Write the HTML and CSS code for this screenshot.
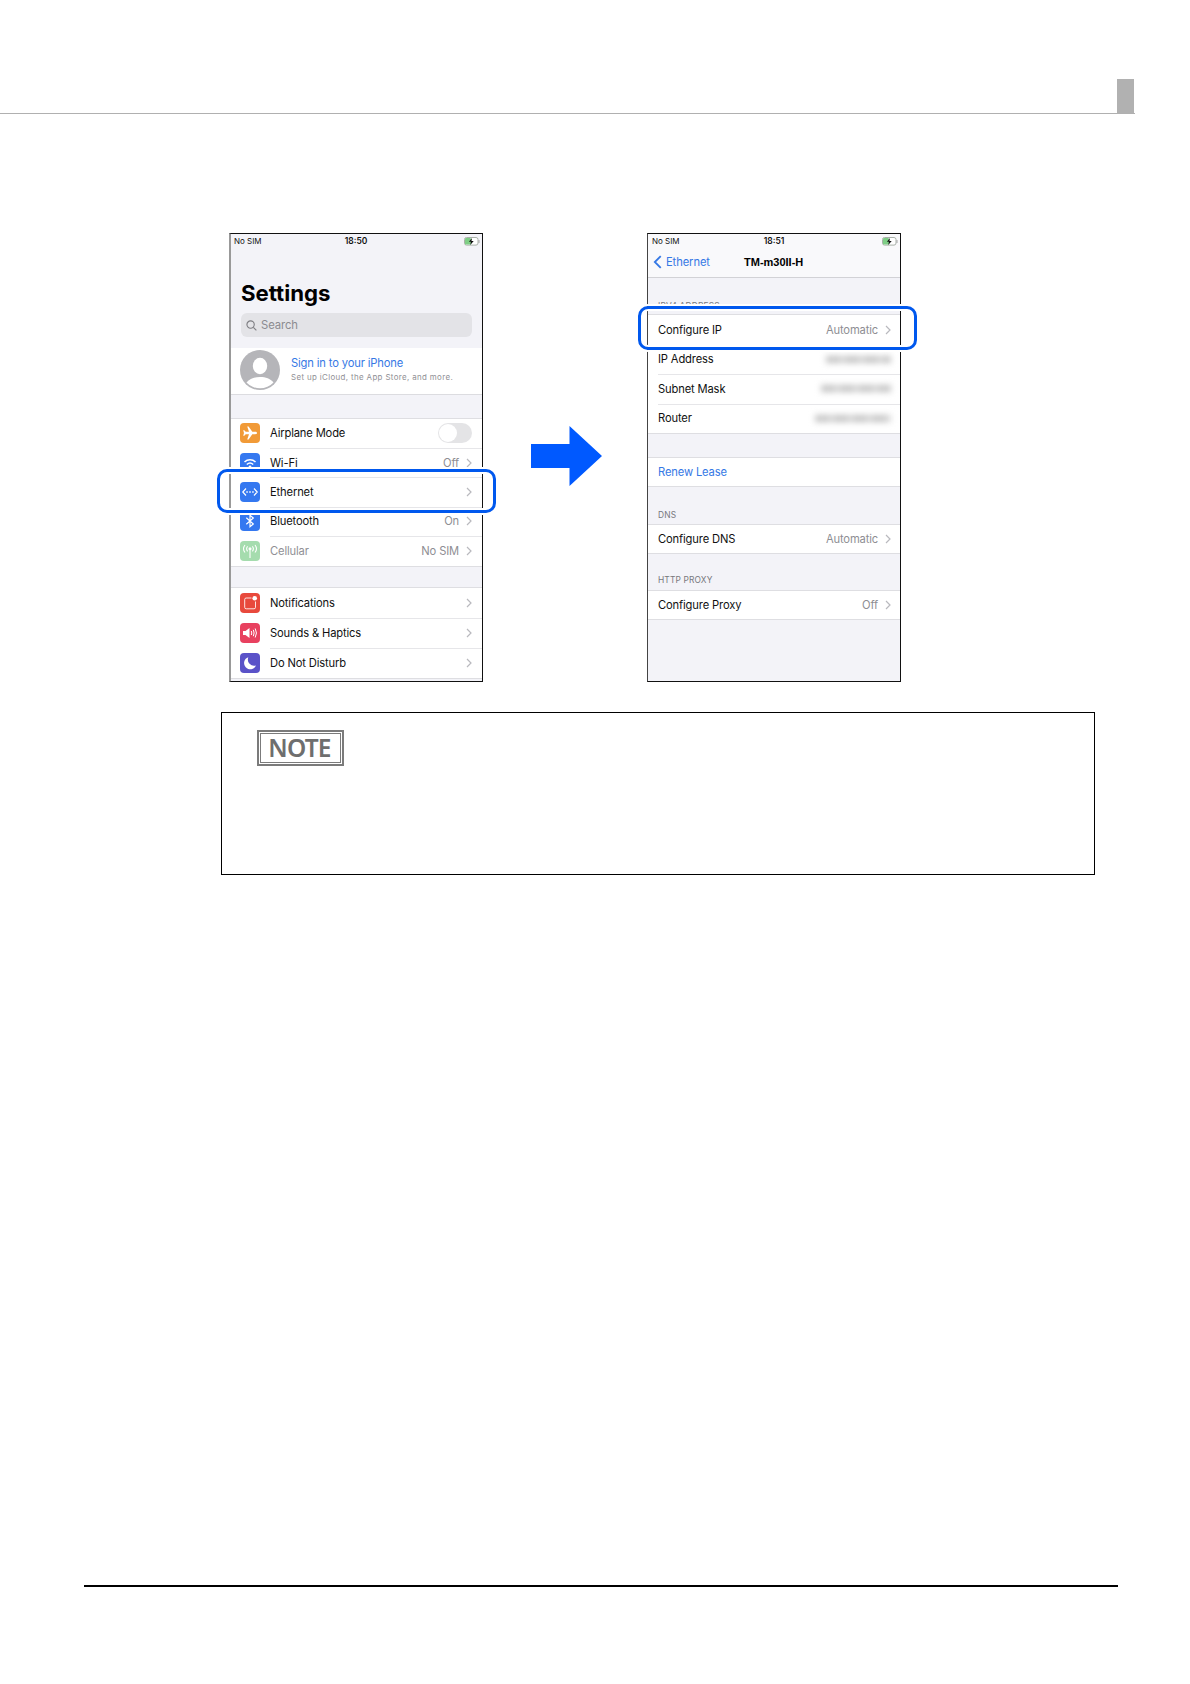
FILE: index.html
```
<!DOCTYPE html>
<html lang="en">
	<head>
		<meta charset="utf-8">
		<title>Settings</title>
		<link rel="stylesheet" href="styles.css">
	</head>
	<body>
		<div class="page-head"><span class="tab"></span></div>

		<div class="figures">
			<div class="phone settings">
				<div class="status">
					<span class="sim">No SIM</span>
					<span class="time">18:50</span>
					<svg class="battery" viewBox="0 0 16 9"><rect x=".5" y=".5" width="13.5" height="7.6" rx="2" fill="#fff" stroke="#a8b0a8"/><rect x="1" y="1" width="6" height="6.6" rx="1.2" fill="#7fce86"/><path d="M15 3v3" stroke="#a8a8a8"/><path d="M8 .9 4.9 4.8h2L6.300 7.900 9.700 3.900H7.500z" fill="#111"/></svg>
				</div>
				<h1>Settings</h1>
				<div class="search">
					<svg viewBox="0 0 12 12"><circle cx="5" cy="5" r="4" /><path d="M8 8l3.300 3.300"/></svg>
					<span>Search</span>
				</div>
				<div class="profile">
					<svg class="avatar" viewBox="0 0 40 40"><circle cx="20" cy="20" r="20" fill="#b5b5b9"/><ellipse cx="20" cy="16" rx="7.200" ry="8.200" fill="#fff"/><path d="M6.500 32.500C10 28.500 14 27 20 27s10 1.500 13.500 5.500A18.500 18.500 0 0 1 6.500 32.500z" fill="#fff"/></svg>
					<div>
						<p class="sign">Sign in to your iPhone</p>
						<p class="hint">Set up iCloud, the App Store, and more.</p>
					</div>
				</div>
				<ul class="list first">
					<li>
						<svg class="icon orange" viewBox="0 0 20 20"><path fill="#fff" d="M17 10c0-.8-.8-1.200-1.700-1.200h-3L8.600 3.500H7.200l1.800 5.300H5.700L4.300 7.200H3.200L4 10l-.8 2.800h1.100l1.400-1.600H9l-1.800 5.300h1.400l3.700-5.300h3c.9 0 1.700-.4 1.700-1.200z"/></svg>
						<span class="name">Airplane Mode</span><span class="switch"></span>
					</li>
					<li>
						<svg class="icon blue" viewBox="0 0 20 20"><path d="M4.500 9a8 8 0 0 1 11 0M6.800 11.500a4.800 4.800 0 0 1 6.400 0" fill="none" stroke="#fff" stroke-width="1.500"/><path d="M8.400 13.300 10 15l1.600-1.700a2.400 2.400 0 0 0-3.200 0z" fill="#fff"/></svg>
						<span class="name">Wi-Fi</span><span class="value">Off</span><svg class="more" viewBox="0 0 6 10"><path d="M1 1l4 4-4 4"/></svg>
					</li>
					<li>
						<svg class="icon blue" viewBox="0 0 20 20"><path d="M6 6.500 2.800 10 6 13.500M14 6.500l3.200 3.500-3.200 3.500" fill="none" stroke="#fff" stroke-width="1.200"/><path d="M6.300 10h1.500M9.250 10h1.500M12.200 10h1.500" stroke="#fff" stroke-width="1.500"/></svg>
						<span class="name">Ethernet</span><svg class="more" viewBox="0 0 6 10"><path d="M1 1l4 4-4 4"/></svg>
					</li>
					<li>
						<svg class="icon blue" viewBox="0 0 20 20"><path d="M6.300 6.800l7 6.200L10 15.700V4.300L13.300 7l-7 6.200" fill="none" stroke="#fff" stroke-width="1.200"/></svg>
						<span class="name">Bluetooth</span><span class="value">On</span><svg class="more" viewBox="0 0 6 10"><path d="M1 1l4 4-4 4"/></svg>
					</li>
					<li class="off">
						<svg class="icon green" viewBox="0 0 20 20"><path d="M10 8v9M7.600 5.300a4 4 0 0 0 0 5M12.400 5.300a4 4 0 0 1 0 5M5 4a6 6 0 0 0 0 7.500M15 4a6 6 0 0 1 0 7.500" fill="none" stroke="#fff" stroke-width="1.100"/><circle cx="10" cy="7.800" r="1.500" fill="#fff"/></svg>
						<span class="name">Cellular</span><span class="value">No SIM</span><svg class="more" viewBox="0 0 6 10"><path d="M1 1l4 4-4 4"/></svg>
					</li>
				</ul>
				<ul class="list second">
					<li>
						<svg class="icon red" viewBox="0 0 20 20"><path d="M11.500 5H6.200Q4.700 5 4.700 6.500v7.800q0 1.500 1.500 1.500H14q1.500 0 1.500-1.500V8.500" fill="none" stroke="#fff" stroke-opacity=".85"/><circle cx="14.700" cy="5.300" r="2.300" fill="#fff"/></svg>
						<span class="name">Notifications</span><svg class="more" viewBox="0 0 6 10"><path d="M1 1l4 4-4 4"/></svg>
					</li>
					<li>
						<svg class="icon pink" viewBox="0 0 20 20"><path d="M3 8h2.500L9.500 5v10l-4-3H3z" fill="#fff"/><path d="M11.300 8q1 2 0 4M13.300 6.800q1.600 3.200 0 6.400M15.200 5.500q2.500 4.500 0 9" fill="none" stroke="#fff"/></svg>
						<span class="name">Sounds &amp; Haptics</span><svg class="more" viewBox="0 0 6 10"><path d="M1 1l4 4-4 4"/></svg>
					</li>
					<li>
						<svg class="icon purple" viewBox="0 0 20 20"><path d="M8.300 4.200A6.200 6.200 0 1 0 16 12.500 6.300 6.300 0 0 1 8.300 4.200z" fill="#fff"/></svg>
						<span class="name">Do Not Disturb</span><svg class="more" viewBox="0 0 6 10"><path d="M1 1l4 4-4 4"/></svg>
					</li>
				</ul>
				<div class="callout"></div>
			</div>

			<svg class="arrow" viewBox="0 0 71 60"><path d="M0 18h38.500V0L71 30 38.500 60V42H0z" fill="#0059ff"/></svg>

			<div class="phone ethernet">
				<div class="nav">
					<div class="status">
						<span class="sim">No SIM</span>
						<span class="time">18:51</span>
						<svg class="battery" viewBox="0 0 16 9"><rect x=".5" y=".5" width="13.5" height="7.6" rx="2" fill="#fff" stroke="#a8b0a8"/><rect x="1" y="1" width="6" height="6.6" rx="1.2" fill="#7fce86"/><path d="M15 3v3" stroke="#a8a8a8"/><path d="M8 .9 4.9 4.8h2L6.300 7.900 9.700 3.900H7.500z" fill="#111"/></svg>
					</div>
					<div class="title-bar">
						<svg class="back" viewBox="0 0 8 13"><path d="M7 1 1.500 6.500 7 12"/></svg>
						<span class="back-name">Ethernet</span>
						<span class="title">TM-m30II-H</span>
					</div>
				</div>
				<p class="group-name ipv4">IPV4 ADDRESS</p>
				<ul class="list address">
					<li><span class="name">Configure IP</span><span class="value">Automatic</span><svg class="more" viewBox="0 0 6 10"><path d="M1 1l4 4-4 4"/></svg></li>
					<li><span class="name">IP Address</span><span class="hidden ip"></span></li>
					<li><span class="name">Subnet Mask</span><span class="hidden mask"></span></li>
					<li><span class="name">Router</span><span class="hidden router"></span></li>
				</ul>
				<ul class="list renew">
					<li><span class="name">Renew Lease</span></li>
				</ul>
				<p class="group-name dns">DNS</p>
				<ul class="list">
					<li><span class="name">Configure DNS</span><span class="value">Automatic</span><svg class="more" viewBox="0 0 6 10"><path d="M1 1l4 4-4 4"/></svg></li>
				</ul>
				<p class="group-name proxy">HTTP PROXY</p>
				<ul class="list">
					<li><span class="name">Configure Proxy</span><span class="value">Off</span><svg class="more" viewBox="0 0 6 10"><path d="M1 1l4 4-4 4"/></svg></li>
				</ul>
				<div class="callout"></div>
			</div>
		</div>

		<div class="note">
			<div class="badge"><span>NOTE</span></div>
		</div>

		<div class="page-foot"></div>
	</body>
</html>
```

FILE: styles.css
```
* {
  padding: 0;
  margin: 0;
  list-style: none;
  box-sizing: border-box;
}

body {
  width: 1190px;
  height: 1684px;
  background: #fff;
  font-family: Inter, "Liberation Sans", sans-serif;
  color: #111;
  display: flex;
  flex-direction: column;
  overflow: hidden;
}

/* page furniture */
.page-head {
  width: 1135px;
  height: 114px;
  padding-right: 1px;
  border-bottom: 1px solid #b0b0b0;
  display: flex;
  justify-content: flex-end;
  align-items: flex-end;
}

.tab {
  width: 17px;
  height: 34px;
  background: #b1b1b1;
}

.page-foot {
  width: 1034px;
  height: 2px;
  margin: auto 0 97px 84px;
  background: #000;
}

.figures {
  display: flex;
  align-items: flex-start;
  margin: 119px 0 0 229px;
}

.arrow {
  width: 71px;
  height: 60px;
  margin: 193px 45.5px 0 47.5px;
}

/* phones */
.phone {
  width: 254px;
  height: 449px;
  background: #f3f3f8;
  border: 1px solid #111;
  position: relative;
}

.settings {
  border-left: 2px solid #999;
}

.ethernet {
  border-left-color: #444;
}

.status {
  height: 15px;
  padding: 0 4px;
  display: grid;
  grid-template-columns: 1fr auto 1fr;
  align-items: center;
  font-size: 8px;
  line-height: 15px;
}

.settings .status {
  padding-left: 3px;
}

.time {
  font-weight: 600;
  font-size: 8.5px;
}

.battery {
  width: 16px;
  height: 9px;
  justify-self: end;
  margin-right: -2px;
}

h1 {
  margin: 27px 0 0 10px;
  height: 34px;
  font-size: 22.2px;
  line-height: 34px;
  font-weight: 700;
  color: #000;
}

.search {
  width: 231px;
  height: 24px;
  margin: 3px 0 0 10px;
  padding-left: 5px;
  border-radius: 6px;
  background: #e3e3e7;
  display: flex;
  align-items: center;
  gap: 4px;
  font-size: 11.3px;
  letter-spacing: -0.1px;
  color: #8b8b90;
}

.search svg {
  width: 11px;
  height: 11px;
  fill: none;
  stroke: #7d7d82;
  stroke-width: 1.2;
}

.profile {
  height: 47px;
  margin-top: 11px;
  padding: 0 0 2px 9px;
  border-bottom: 1px solid #dcdce0;
  background: #fff;
  display: flex;
  align-items: center;
  gap: 11px;
}

.avatar {
  width: 40px;
  height: 40px;
}

.sign {
  font-size: 11.2px;
  line-height: 15px;
  letter-spacing: -0.15px;
  color: #3578e5;
}

.hint {
  font-size: 7.9px;
  line-height: 13px;
  letter-spacing: 0.37px;
  color: #909095;
}

.list {
  background: #fff;
  border-top: 1px solid #dedee2;
  border-bottom: 1px solid #dedee2;
}

.list li {
  height: 28px;
  padding: 0 9px 0 10px;
  display: flex;
  align-items: center;
  font-size: 11.2px;
  letter-spacing: -0.15px;
}

.address li {
  height: 29.5px;
}

.settings .list li {
  height: 29.4px;
  padding: 0 10px 0 9px;
}

.settings .second li {
  height: 29.8px;
}

/* separator starts under the label */
.list li + li {
  background: linear-gradient(#e6e6e9, #e6e6e9) 10px 0 / 100% 1px no-repeat;
}

.settings .list li + li {
  background-position-x: 39px;
}

.first {
  margin-top: 22.6px;
}

.second {
  margin-top: 20.8px;
}

.name {
  flex: 1;
}

.value {
  color: #8e8e93;
  margin-right: 7px;
}

.more {
  width: 6px;
  height: 10px;
  fill: none;
  stroke: #b9b9be;
  stroke-width: 1.2;
}

.icon {
  width: 20px;
  height: 20px;
  margin-right: 10px;
  border-radius: 4px;
}

.orange { background: #f19a37; }
.blue { background: #3478f0; }
.green { background: #a5dcae; }
.red { background: #e8493c; }
.pink { background: #e8415f; }
.purple { background: #5a52c8; }

.off {
  color: #909095;
}

.switch {
  width: 34px;
  height: 20px;
  border-radius: 10px;
  background: #e4e4e6;
  padding: 1px;
}

.switch::before {
  content: "";
  display: block;
  width: 18px;
  height: 18px;
  border-radius: 50%;
  background: #fff;
}

/* second screen */
.nav {
  height: 44px;
  background: #f9f9fb;
  border-bottom: 1px solid #d2d2d6;
}

.title-bar {
  height: 26px;
  padding-left: 5px;
  display: flex;
  align-items: center;
  font-size: 11.2px;
  letter-spacing: -0.1px;
  color: #3578e5;
}

.back {
  width: 9px;
  height: 14px;
  margin-right: 4px;
  fill: none;
  stroke: #3578e5;
  stroke-width: 1.7;
}

.back-name {
  width: 78px;
}

.title {
  font-family: "Liberation Sans", sans-serif;
  font-weight: 700;
  font-size: 11px;
  letter-spacing: 0;
  color: #000;
}

.group-name {
  padding-left: 10px;
  font-size: 8.4px;
  line-height: 10px;
  letter-spacing: 0.15px;
  color: #77777c;
}

.ipv4 {
  padding-top: 23px;
  height: 36px;
}

.dns {
  padding-top: 23px;
  height: 37px;
}

.proxy {
  padding-top: 21px;
  height: 36px;
}

.renew {
  margin-top: 23px;
  color: #3578e5;
}

.hidden {
  height: 7px;
  background: repeating-linear-gradient(90deg, #c4c4c4 0 14px, #d6d6d6 14px 19px);
  filter: blur(3px);
}

.ip { width: 65px; }
.mask { width: 70px; }
.router { width: 76px; }

.callout {
  position: absolute;
  left: -14px;
  top: 235px;
  width: 279px;
  height: 44px;
  border: 3px solid #0058ee;
  border-radius: 10px;
  box-shadow: 0 0 0 2px #fff, inset 0 0 0 2px #fff;
}

.ethernet .callout {
  left: -10px;
  top: 72px;
}

/* note */
.note {
  width: 874px;
  height: 163px;
  margin: 30px 0 0 221px;
  padding: 17px 35px;
  border: 1px solid #000;
}

.badge {
  width: 87px;
  height: 36px;
  padding: 1px;
  border: 2px solid #7b7b7b;
}

.badge span {
  display: block;
  height: 30px;
  padding-right: 2px;
  border: 1px solid #7b7b7b;
  font-family: "Noto Sans", "Open Sans", sans-serif;
  font-weight: 600;
  font-size: 24.5px;
  line-height: 28px;
  letter-spacing: -0.8px;
  text-align: center;
  color: #6e6e6e;
}
```
